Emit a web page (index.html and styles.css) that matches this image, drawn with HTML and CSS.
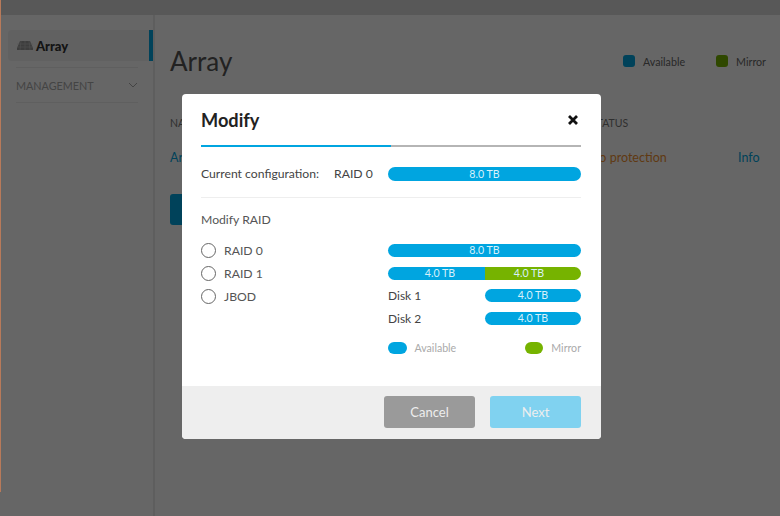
FILE: index.html
```html
<!DOCTYPE html>
<html lang="en">
<head>
<meta charset="utf-8">
<title>Array</title>
<link rel="stylesheet" href="styles.css">
</head>
<body>
<div class="app">
  <div class="main-col">
    <header class="topbar"></header>
    <div class="content">
      <aside class="sidebar">
        <div class="nav-item">
          <svg class="nav-icon" viewBox="0 0 16 9" width="16" height="9"><path d="M3 0h10l3 7v2H0V7z" fill="#9a9a9a"/><path d="M0 3h16M0 6h16M4 0L3 9M8 0v9M12 0l1 9" stroke="#cfcfcf" stroke-width=".5"/></svg>
          <span>Array</span>
        </div>
        <div class="nav-group">
          <span>MANAGEMENT</span>
          <svg viewBox="0 0 10 6" width="10" height="6"><path d="M1 1l4 4 4-4" fill="none" stroke="#aaa" stroke-width="1"/></svg>
        </div>
      </aside>
      <main class="page">
        <div class="page-head">
          <h1>Array</h1>
          <div class="key">
            <span class="key-item"><i class="key-dot blue"></i>Available</span>
            <span class="key-item"><i class="key-dot green"></i>Mirror</span>
          </div>
        </div>
        <div class="table-head"><span>NAME</span><span class="col-status">STATUS</span></div>
        <div class="table-row"><a>Array</a><span class="warn">No protection</span><a class="info">Info</a></div>
        <button class="page-btn" aria-label="Modify"></button>
      </main>
    </div>
  </div>
</div>
<div class="overlay"></div>
<div class="edge"></div>
<section class="modal">
  <div class="modal-body">
    <div class="modal-title"><h2>Modify</h2>
      <svg class="close" viewBox="0 0 12 12" width="12" height="12"><path d="M2 2l8 8M10 2l-8 8" stroke="#111" stroke-width="2.8"/></svg>
    </div>
    <div class="progress"><div class="progress-fill"></div></div>
    <div class="current">
      <span class="current-label">Current configuration:</span>
      <span class="current-value">RAID 0</span>
      <div class="bar"><span class="seg blue full">8.0 TB</span></div>
    </div>
    <hr class="rule">
    <div class="sub">Modify RAID</div>
    <div class="options">
      <div class="radios">
        <label class="radio"><i></i>RAID 0</label>
        <label class="radio"><i></i>RAID 1</label>
        <label class="radio"><i></i>JBOD</label>
      </div>
      <div class="bars">
        <div class="bar"><span class="seg blue full">8.0 TB</span></div>
        <div class="bar"><span class="seg blue left">4.0 TB</span><span class="seg green right">4.0 TB</span></div>
        <div class="bar disk"><span class="disk-name">Disk 1</span><span class="seg blue half">4.0 TB</span></div>
        <div class="bar disk"><span class="disk-name">Disk 2</span><span class="seg blue half">4.0 TB</span></div>
        <div class="legend">
          <span class="legend-item"><i class="swatch blue"></i>Available</span>
          <span class="legend-item"><i class="swatch green"></i>Mirror</span>
        </div>
      </div>
    </div>
  </div>
  <footer class="modal-foot">
    <button class="btn cancel">Cancel</button>
    <button class="btn next">Next</button>
  </footer>
</section>
</body>
</html>
```
FILE: styles.css
```css
* { box-sizing: border-box; }
html, body { margin: 0; height: 516px; overflow: hidden; }
body { font-family: Lato, "Open Sans", sans-serif; color: #444; background: #fff; position: relative; }
.app { display: flex; height: 516px; padding-left: 1px; }
.edge { position: absolute; left: 0; top: 0; width: 1px; height: 492px; background: #b87a5a; }
.main-col { flex: 1; display: flex; flex-direction: column; }
.topbar { height: 15px; background: #dcdcdc; flex: none; }
.content { flex: 1; display: flex; }
.sidebar { width: 154px; border-right: 2px solid #ebebeb; padding: 15px 0 0 7px; flex: none; }
.nav-item { height: 31px; width: 145px; background: #f2f2f2; border-right: 4px solid #00a5e0; border-radius: 4px 0 0 4px; display: flex; align-items: center; padding-left: 9px; gap: 3px; font-size: 13px; font-weight: 900; color: #333; }
.nav-group { margin: 6px 0 0 8px; width: 122px; height: 36px; border-top: 1px solid #eee; border-bottom: 1px solid #eee; display: flex; align-items: center; justify-content: space-between; font-size: 10.8px; color: #aaa; }
.page { flex: 1; padding: 15px 14px 0 15px; }
.page-head { display: flex; justify-content: space-between; align-items: center; height: 62px; }
.page-head h1 { margin: 0; font-size: 26px; font-weight: 400; color: #555; }
.key { display: flex; gap: 31px; font-size: 10.7px; }
.key-item { display: flex; align-items: center; gap: 8px; color: #666; }
.key-dot { width: 12px; height: 12px; border-radius: 3px; }
.blue { background: #00a5e0; }
.green { background: #76b300; }
.table-head { margin-top: 25px; font-size: 10.5px; color: #777; position: relative; height: 14px; }
.col-status { position: absolute; left: 421px; }
.table-row { margin-top: 19px; font-size: 12.5px; position: relative; height: 16px; color: #00a5e0; }
.warn { position: absolute; left: 420px; color: #f09030; }
.info { position: absolute; left: 568px; }
.page-btn { display: block; margin-top: 28px; width: 90px; height: 31px; border: 0; border-radius: 3px; background: #00a5e0; color: #fff; }
.overlay { position: absolute; inset: 0; background: rgba(0, 0, 0, .6); }
.modal { position: absolute; left: 182px; top: 94px; width: 419px; height: 345px; background: #fff; border-radius: 4px; display: flex; flex-direction: column; overflow: hidden; }
.modal-body { flex: 1; padding: 0 20px 0 19px; }
.modal-title { height: 51px; display: flex; align-items: center; justify-content: space-between; padding: 0 2px 0 0; }
.modal-title h2 { margin: 0; font-size: 18.2px; font-weight: 700; color: #222; }
.progress { height: 2px; background: #b5b5b5; }
.progress-fill { width: 190px; height: 2px; background: #00a5e0; }
.current { display: flex; align-items: center; margin-top: 19px; font-size: 12.2px; color: #444; height: 15px; }
.current-label { width: 133px; flex: none; }
.current-value { width: 54px; flex: none; }
.rule { border: 0; height: 1px; background: #eee; margin: 16px 0 0; }
.sub { margin-top: 14px; font-size: 12.2px; line-height: 16px; color: #555; }
.options { display: flex; margin-top: 16px; }
.radios { width: 187px; flex: none; display: flex; flex-direction: column; gap: 7.75px; margin-top: -1px; }
.radio { display: flex; align-items: center; height: 15px; gap: 8px; font-size: 12.2px; color: #555; }
.radio i { width: 15px; height: 15px; border: 1.3px solid #666; border-radius: 50%; }
.bars { flex: 1; display: flex; flex-direction: column; gap: 9.5px; }
.bar { flex: 1; display: flex; height: 13px; min-width: 0; }
.bars .bar { flex: none; }
.seg { display: flex; align-items: center; justify-content: center; font-size: 10.6px; line-height: 13px; color: #d8f1fb; height: 13px; }
.current .seg { height: 14px; }
.full { width: 100%; border-radius: 7px; }
.left { width: 97px; padding-left: 7px; border-radius: 7px 0 0 7px; }
.right { width: 96px; padding-right: 8px; border-radius: 0 7px 7px 0; }
.half { width: 96px; border-radius: 7px; }
.disk { align-items: center; justify-content: space-between; }
.disk-name { font-size: 12px; color: #444; }
.legend { display: flex; justify-content: space-between; margin-top: 8px; font-size: 10.6px; color: #aaa; }
.legend-item { display: flex; align-items: center; gap: 8px; }
.swatch { width: 18.5px; height: 12px; border-radius: 6px; }
.modal-foot { height: 53px; background: #eee; display: flex; justify-content: flex-end; gap: 15px; padding: 10px 20px 0 0; flex: none; }
.btn { width: 91px; height: 32px; border: 0; border-radius: 3px; font: 13px Lato, sans-serif; color: #eee; }
.cancel { background: #9a9a9a; }
.next { background: #80d2f0; }
```
